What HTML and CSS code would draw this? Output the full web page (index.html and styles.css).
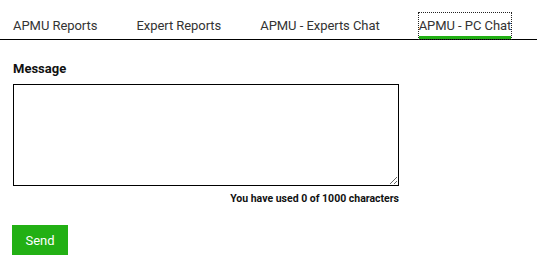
FILE: index.html
```html
<!DOCTYPE html>
<html lang="en">
<head>
  <meta charset="UTF-8">
  <meta name="viewport" content="width=device-width, initial-scale=1.0">
  <title>APMU - PC Chat</title>
  <link rel="stylesheet" href="styles.css">
</head>
<body>
  <!-- Tabs -->
  <ul class="tabs">
    <li class="tab">APMU Reports</li>
    <li class="tab">Expert Reports</li>
    <li class="tab">APMU - Experts Chat</li>
    <li class="tab active">APMU - PC Chat</li>
  </ul>

  <!-- Message form -->
  <form class="chat-form">
    <label class="label" for="message">Message</label>
    <textarea id="message" class="message"></textarea>
    <div class="counter">You have used 0 of 1000 characters</div>
    <button type="button" class="send">Send</button>
  </form>
</body>
</html>
```

FILE: styles.css
```css
* {
  margin: 0;
  padding: 0;
  box-sizing: border-box;
}

body {
  font-family: Roboto, "Liberation Sans", sans-serif;
  color: #333;
  background: #fff;
}

.tabs {
  display: flex;
  list-style: none;
  width: 537px;
  padding: 13px 0 0 13px;
  border-bottom: 1px solid #000;
}

.tab {
  flex-shrink: 0;
  white-space: nowrap;
  margin-right: 39px;
  font-size: 13px;
  letter-spacing: -0.05px;
  line-height: 21px;
  padding-top: 2px;
  border-bottom: 3px solid transparent;
}

.tab.active {
  border-bottom-color: #22b014;
  outline: 1px dotted #222;
}

.chat-form {
  display: flex;
  flex-direction: column;
  align-items: flex-start;
  padding: 20px 0 0 13px;
}

.label {
  font-size: 13px;
  font-weight: bold;
  color: #111;
  line-height: 18px;
  margin-bottom: 6px;
}

.message {
  width: 386px;
  height: 102px;
  border: 1px solid #000;
  resize: vertical;
}

.counter {
  width: 386px;
  text-align: right;
  font-size: 10.5px;
  font-weight: bold;
  color: #111;
  margin-top: 6px;
}

.send {
  margin-top: 20px;
  margin-left: -1px;
  width: 56px;
  height: 30px;
  border: none;
  background: #22b014;
  color: #fff;
  font-family: Roboto, "Liberation Sans", sans-serif;
  font-size: 13px;
}
```
